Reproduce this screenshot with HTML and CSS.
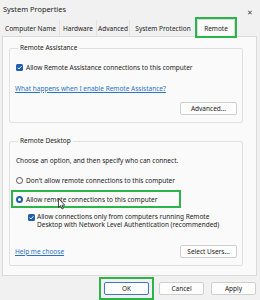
FILE: index.html
```html
<!DOCTYPE html>
<html lang="en">

<head>
    <meta charset="UTF-8">
    <meta name="viewport" content="width=device-width, initial-scale=1.0">
    <title>System Properties</title>
    <link rel="stylesheet" href="styles.css">
</head>

<body>
    <div class="titlebar">
        <span>System Properties</span>
        <span class="close">&#x2715;</span>
    </div>

    <div class="tabs">
        <div class="tab t-name">Computer Name</div>
        <div class="tab t-hw">Hardware</div>
        <div class="tab t-adv">Advanced</div>
        <div class="tab t-sys">System Protection</div>
        <div class="tab t-remote active hl">Remote</div>
    </div>

    <div class="panel">
        <fieldset class="group assist">
            <legend>Remote Assistance</legend>
            <div class="row check-row">
                <span class="checkbox">
                    <svg viewBox="0 0 8 8" width="8" height="8"><path d="M1.8 4.2 L3.3 5.7 L6.3 2.5" fill="none" stroke="#fff" stroke-width="1.1"/></svg>
                </span>
                <span>Allow Remote Assistance connections to this computer</span>
            </div>
            <div class="row link-row">
                <a href="#" class="link">What happens when I enable Remote Assistance?</a>
            </div>
            <div class="row btn-row">
                <button class="btn wide">Advanced...</button>
            </div>
        </fieldset>

        <fieldset class="group desktop">
            <legend>Remote Desktop</legend>
            <div class="row choose-row">Choose an option, and then specify who can connect.</div>
            <div class="row radio-row r1">
                <span class="radio"></span>
                <span>Don't allow remote connections to this computer</span>
            </div>
            <div class="row radio-row r2 hl">
                <span class="radio on"></span>
                <span>Allow remote connections to this computer</span>
                <svg class="cursor" viewBox="0 0 8 12" width="8" height="12"><path d="M0.5 0.5 L0.5 9.5 L2.6 7.6 L4 11 L5.4 10.4 L4 7.2 L6.8 7.2 Z" fill="#fff" stroke="#222" stroke-width="0.8"/></svg>
            </div>
            <div class="sub-row">
                <span class="checkbox">
                    <svg viewBox="0 0 8 8" width="8" height="8"><path d="M1.8 4.2 L3.3 5.7 L6.3 2.5" fill="none" stroke="#fff" stroke-width="1.1"/></svg>
                </span>
                <span>Allow connections only from computers running Remote<br>Desktop with Network Level Authentication (recommended)</span>
            </div>
            <div class="row help-row">
                <a href="#" class="link">Help me choose</a>
                <button class="btn wide">Select Users...</button>
            </div>
        </fieldset>
    </div>

    <div class="footer">
        <span class="ok-box hl"><button class="btn ok">OK</button></span>
        <button class="btn">Cancel</button>
        <button class="btn">Apply</button>
    </div>
</body>

</html>
```

FILE: styles.css
```css
body {
    margin: 0;
    width: 260px;
    height: 300px;
    overflow: hidden;
    background-color: #f1f1f1;
    font-family: "Noto Sans", "Open Sans", sans-serif;
    font-size: 6.5px;
    color: #1c1c1c;
}

.titlebar {
    height: 18px;
    display: flex;
    align-items: center;
    justify-content: space-between;
    padding: 0 7px 0 3px;
    font-size: 7.4px;
}

.close {
    font-size: 7px;
    color: #444;
    margin-top: 6px;
}

.tabs {
    display: flex;
    align-items: flex-end;
    height: 18px;
    margin-left: 2px;
}

.tab {
    height: 16px;
    display: flex;
    align-items: center;
    justify-content: center;
    box-sizing: border-box;
    border-right: 1px solid #e2e2e2;
    white-space: nowrap;
}

.t-name { width: 58px; }
.t-hw { width: 37px; }
.t-adv { width: 33px; }
.t-sys { width: 67px; }
.t-remote { width: 38px; }

.tab.active {
    height: 17px;
    background: #fafafa;
    border: 1px solid #d8d8d8;
    border-bottom: none;
}

.hl {
    outline: 2px solid #2cb44a;
}

.panel {
    width: 255px;
    height: 240px;
    margin-left: 2px;
    box-sizing: border-box;
    border: 1px solid #dadada;
    background: #fafafa;
    padding: 7px 0 0 6px;
}

.group {
    width: 234px;
    margin: 0;
    padding: 0 5px 0 6px;
    box-sizing: border-box;
    border: 1px solid #e0e0e0;
    border-radius: 2px;
    display: flex;
    flex-direction: column;
}

.group legend {
    margin-left: 2px;
    padding: 0 2px;
    line-height: 8px;
}

.assist {
    height: 79px;
}

.desktop {
    height: 129px;
    margin-top: 14px;
}

.row {
    display: flex;
    align-items: center;
    height: 10px;
}

.checkbox {
    width: 7px;
    height: 7px;
    border-radius: 1.5px;
    background: #1f5fae;
    display: flex;
    align-items: center;
    justify-content: center;
    margin-right: 3px;
    flex-shrink: 0;
}

.checkbox svg {
    width: 7px;
    height: 7px;
}

.check-row {
    margin-top: 10px;
}

.link-row {
    margin-top: 11px;
}

.link {
    color: #2a72c2;
    text-decoration: underline;
    margin-left: -1px;
}

.btn-row {
    height: 13px;
    margin-top: 9px;
    justify-content: flex-end;
}

.btn {
    width: 45px;
    height: 13px;
    padding: 0;
    font-family: inherit;
    font-size: 6.5px;
    color: #1c1c1c;
    background: #fdfdfd;
    border: 1px solid #cfcfcf;
    border-radius: 2px;
}

.btn.wide {
    width: 57px;
}

.choose-row {
    margin-top: 10px;
}

.r1 {
    margin-top: 10px;
}

.r2 {
    position: relative;
    margin-top: 9px;
    margin-left: -1px;
    padding-left: 1px;
    width: 161px;
    outline-offset: 2px;
}

.radio {
    width: 7px;
    height: 7px;
    box-sizing: border-box;
    border: 1px solid #555;
    border-radius: 50%;
    margin-right: 3px;
    flex-shrink: 0;
}

.radio.on {
    border: 2.2px solid #1f5fae;
    background: #fff;
}

.cursor {
    position: absolute;
    left: 43px;
    top: 4px;
}

.sub-row {
    display: flex;
    align-items: flex-start;
    margin-top: 9px;
    margin-left: 12px;
    line-height: 8px;
}

.sub-row .checkbox {
    margin-top: 1px;
    margin-right: 2px;
}

.help-row {
    height: 13px;
    margin-top: 16px;
    justify-content: space-between;
}

.footer {
    display: flex;
    justify-content: flex-end;
    align-items: center;
    gap: 4px;
    padding-right: 4px;
    margin-top: 3px;
}

.footer > .btn {
    margin-left: 3px;
}

.ok-box {
    display: flex;
    padding: 3px;
}

.ok {
    border-color: #3f78c4;
}
```
